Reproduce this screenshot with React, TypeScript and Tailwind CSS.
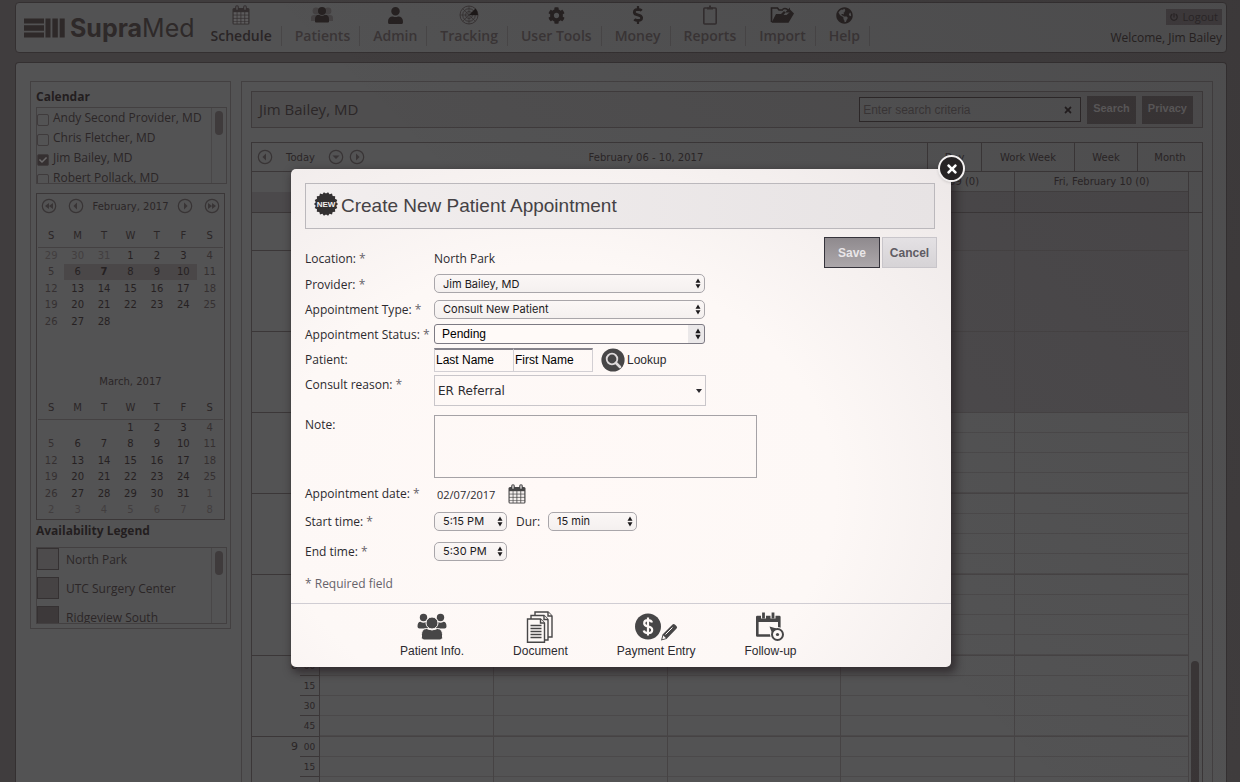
import type { ReactNode } from 'react';
import {
  FaCheck,
  FaCog,
  FaDollarSign,
  FaGlobeAmericas,
  FaPowerOff,
  FaTimes,
  FaUser,
} from 'react-icons/fa';

const CalendarIcon = ({ className }: { className: string }) => (
  <svg viewBox="0 0 18 20" className={className} aria-hidden="true">
    <rect x="0.5" y="3" width="17" height="16.5" rx="1.5" fill="currentColor" />
    <g fill="currentColor">
      <rect x="3.2" y="0.2" width="3.6" height="5.6" rx="1.8" />
      <rect x="11.2" y="0.2" width="3.6" height="5.6" rx="1.8" />
    </g>
    <g className="fill-(--cell)">
      <rect x="4.4" y="1.2" width="1.2" height="3.6" rx="0.6" />
      <rect x="12.4" y="1.2" width="1.2" height="3.6" rx="0.6" />
      {[7.2, 10.4, 13.6, 16.6].map((y) =>
        [1.6, 5.4, 9.3, 13.2].map((x) => (
          <rect key={`${x}-${y}`} x={x} y={y} width="3.1" height={y > 16 ? 2 : 2.5} />
        )),
      )}
    </g>
  </svg>
);

const PatientsIcon = () => (
  <svg viewBox="0 0 24 18" className="h-[18px] w-6" aria-hidden="true">
    <g fill="#444142">
      <circle cx="6" cy="5" r="3.4" />
      <circle cx="18" cy="5" r="3.4" />
      <path d="M1 15v-3q0-3 3-3h3v6zM23 15v-3q0-3-3-3h-3v6z" />
    </g>
    <g fill="#262121">
      <circle cx="12" cy="5" r="4" />
      <path d="M5 15.500v-2.500q0-4 4-4.200 3 1.800 6 0 4 .2 4 4.200v2.500q0 1-1 1H6q-1 0-1-1z" />
    </g>
  </svg>
);

const TrackingIcon = () => (
  <svg viewBox="0 0 20 20" className="h-5 w-5" fill="none" stroke="#353031" strokeWidth="0.900" aria-hidden="true">
    <circle cx="10" cy="10" r="9" />
    <circle cx="10" cy="10" r="6.300" />
    <circle cx="10" cy="10" r="3.500" />
    <path d="M1 10h18M10 1v18M3.600 3.600l12.800 12.800M3.600 16.400L10 10" strokeWidth="0.7" />
    <path d="M10 10L16.500 3.500A9 9 0 0 1 19 10z" fill="#1c1818" stroke="none" />
  </svg>
);

const ClipboardIcon = () => (
  <svg viewBox="0 0 16 20" className="h-5 w-4" fill="none" stroke="#332e2f" aria-hidden="true">
    <rect x="1.800" y="3" width="12.400" height="16" rx="1" strokeWidth="1.600" />
    <path d="M5 3.500h6M8 .5v3" strokeWidth="2" />
  </svg>
);

const ImportIcon = () => (
  <svg viewBox="0 0 24 18" className="h-[18px] w-6" aria-hidden="true">
    <path d="M1.500 16V2h6l1.500 2h4" fill="none" stroke="currentColor" strokeWidth="1.600" />
    <path d="M1.500 16.800L6 8h5l3-3 1.500 1.500L13.500 9h3L20 6V3.500L24 7.500 18.500 16.800z" fill="currentColor" />
    <path d="M12.500 3.500q3-2.500 6 1" fill="none" stroke="currentColor" strokeWidth="1.500" />
    <path d="M20 1.500v5h-5z" fill="currentColor" />
  </svg>
);

const navItems: { label: string; icon: ReactNode; active?: boolean }[] = [
  { label: 'Schedule', icon: <CalendarIcon className="h-5 w-[18px] text-[#332e2f]" />, active: true },
  { label: 'Patients', icon: <PatientsIcon /> },
  { label: 'Admin', icon: <FaUser className="h-[17px] w-[15px]" /> },
  { label: 'Tracking', icon: <TrackingIcon /> },
  { label: 'User Tools', icon: <FaCog className="size-[17px]" /> },
  { label: 'Money', icon: <FaDollarSign className="size-[18px]" /> },
  { label: 'Reports', icon: <ClipboardIcon /> },
  { label: 'Import', icon: <ImportIcon /> },
  { label: 'Help', icon: <FaGlobeAmericas className="size-[17px]" /> },
];

function Header() {
  return (
    <header className="mt-0.5 mr-[13px] ml-[15px] flex h-[51px] shrink-0 rounded-sm border border-[#343031] bg-[#525253] pl-2">
      <a href="#home" aria-label="SupraMed" className="flex h-[49px] items-center gap-1 text-[#2e2929]">
        <svg viewBox="0 0 42 20" className="h-5 w-[42px]" fill="currentColor" aria-hidden="true">
          <path d="M0 .5h20v5H0zM0 7.200h20v5.600H0zM0 14.500h20v5H0zM21.500.5h5v19h-5zM28.400.5h5.400v19h-5.400zM35.700.5h5v19h-5z" />
        </svg>
        <span className="font-['Inter',sans-serif] text-[25px] leading-8">
          <b>Supra</b>
          Med
        </span>
      </a>
      <nav className="ml-[3px] flex text-[#262121]">
        {navItems.map((item) => (
          <div key={item.label} className="flex items-end pb-1.5">
            <button
              type="button"
              className="flex flex-col items-center pr-[9px] pl-[13px] [--cell:#5c5b5c]"
            >
              <span className="flex h-[22px] items-center justify-center">{item.icon}</span>
              <span
                className={`font-['Open_Sans',sans-serif] text-sm leading-5 font-semibold ${item.active ? 'text-[#2a2526]' : 'text-[#3a3536]'}`}
              >
                {item.label}
              </span>
            </button>
            <span className="h-5 w-px bg-[#484647]" />
          </div>
        ))}
      </nav>
      <div className="ml-auto flex flex-col items-end pt-1.5 pr-1 font-['Open_Sans',sans-serif] text-[#262121]">
        <button
          type="button"
          className="flex h-4 items-center gap-1 bg-[#403c3e] px-1 text-[11px] text-[#2a2627]"
        >
          <FaPowerOff className="size-2" />
          Logout
        </button>
        <span className="mt-[3px] text-xs leading-5">Welcome, Jim Bailey</span>
      </div>
    </header>
  );
}

const providers = ['Andy Second Provider, MD', 'Chris Fletcher, MD', 'Jim Bailey, MD', 'Robert Pollack, MD'];

const weekdays = ['S', 'M', 'T', 'W', 'T', 'F', 'S'];

const february = [
  [29, 30, 31, 1, 2, 3, 4],
  [5, 6, 7, 8, 9, 10, 11],
  [12, 13, 14, 15, 16, 17, 18],
  [19, 20, 21, 22, 23, 24, 25],
  [26, 27, 28, 0, 0, 0, 0],
  [0, 0, 0, 0, 0, 0, 0],
];
const march = [
  [0, 0, 0, 1, 2, 3, 4],
  [5, 6, 7, 8, 9, 10, 11],
  [12, 13, 14, 15, 16, 17, 18],
  [19, 20, 21, 22, 23, 24, 25],
  [26, 27, 28, 29, 30, 31, 1],
  [2, 3, 4, 5, 6, 7, 8],
];

function dayTone(week: number, day: number, column: number) {
  if ((week === 0 && day > 20) || (week > 3 && day < 9)) return 'text-[#423e3f]';
  return column === 0 || column === 6 ? 'text-[#353031]' : 'text-[#262122]';
}

function MonthTable({ weeks, label, currentWeek }: { weeks: number[][]; label: string; currentWeek?: number }) {
  return (
    <table aria-label={label} className="w-full table-fixed border-collapse text-center text-[10px]">
      <thead>
        <tr className="h-[23px] border-b border-[#444142] text-[#2b2627]">
          {weekdays.map((name, i) => (
            <th key={i} className="p-0 font-normal">
              {name}
            </th>
          ))}
        </tr>
      </thead>
      <tbody>
        {weeks.map((week, row) => (
          <tr key={row} className={row % 2 ? 'h-4' : 'h-[17px]'}>
            {week.map((day, column) => {
              const current = row === currentWeek && column > 0 && column < 6;
              const today = row === currentWeek && column === 2;
              return (
                <td
                  key={column}
                  className={`p-0 leading-4 ${dayTone(row, day, column)} ${current ? 'bg-[#4a4748]' : ''} ${today ? 'font-bold' : ''}`}
                >
                  {day || ''}
                </td>
              );
            })}
          </tr>
        ))}
      </tbody>
    </table>
  );
}

type ArrowKind = 'left' | 'right' | 'down' | 'first' | 'last';

const arrowPaths: Record<ArrowKind, string> = {
  left: 'M9 4.500v7L5.500 8z',
  right: 'M7 4.500v7L10.500 8z',
  down: 'M4.500 6.500h7L8 10z',
  first: 'M8 5v6L4 8zM12 5v6L8 8z',
  last: 'M4 5v6l4-3zM8 5v6l4-3z',
};

function ArrowButton({ kind, label }: { kind: ArrowKind; label: string }) {
  return (
    <button type="button" aria-label={label}>
      <svg viewBox="0 0 16 16" className="size-4 text-[#393536]" aria-hidden="true">
        <circle cx="8" cy="8" r="6.700" fill="none" stroke="currentColor" strokeWidth="1.200" />
        <path d={arrowPaths[kind]} fill="currentColor" />
      </svg>
    </button>
  );
}

const legend = [
  { name: 'North Park', swatch: 'bg-[#4d4b4c]' },
  { name: 'UTC Surgery Center', swatch: 'bg-[#464344]' },
  { name: 'Ridgeview South', swatch: 'bg-[#3d393a]' },
];

function ScrollTrack() {
  return (
    <div className="w-[15px] shrink-0 border-l border-[#494748] pt-[3px] pl-[3px]">
      <div className="h-6 w-2 rounded-full bg-[#3f3b3c]" />
    </div>
  );
}

function Sidebar() {
  return (
    <aside className="w-[201px] shrink-0 self-start border border-[#434041] pt-[5px] pr-[3px] pb-1 pl-[5px] font-['Open_Sans',sans-serif] text-[#2b2627]">
      <h2 className="text-xs leading-5 font-bold text-[#231e1f]">Calendar</h2>
      <div className="flex h-[77px] overflow-hidden border border-[#434041]">
        <div className="flex-1">
          {providers.map((name) => (
            <label key={name} className="relative flex h-5 items-center gap-1 text-xs whitespace-nowrap">
              <input
                type="checkbox"
                defaultChecked={name === 'Jim Bailey, MD'}
                className="peer mt-1 size-3 appearance-none rounded-xs border border-[#3f3b3c] checked:bg-[#353031]"
              />
              <FaCheck className="absolute top-2 left-0.5 hidden size-2 text-[#6b696a] peer-checked:block" />
              {name}
            </label>
          ))}
        </div>
        <ScrollTrack />
      </div>

      <div className="mt-[9px] mr-[2px] h-[327px] border border-[#3b3738] px-px font-['DejaVu_Sans',sans-serif]">
        <div className="mt-1 flex h-4 items-center justify-between px-[3px]">
          <div className="flex gap-[11px]">
            <ArrowButton kind="first" label="Previous year" />
            <ArrowButton kind="left" label="Previous month" />
          </div>
          <span className="text-[10px]">February, 2017</span>
          <div className="flex gap-[11px]">
            <ArrowButton kind="right" label="Next month" />
            <ArrowButton kind="last" label="Next year" />
          </div>
        </div>
        <div className="mt-2.5">
          <MonthTable weeks={february} label="February 2017" currentWeek={1} />
        </div>
        <p className="mt-[28px] mb-1.5 text-center text-[10px] leading-4">March, 2017</p>
        <MonthTable weeks={march} label="March 2017" />
      </div>

      <h2 className="text-xs leading-[22px] font-bold text-[#231e1f]">Availability Legend</h2>
      <div className="mt-[5px] flex h-[77px] overflow-hidden border border-[#434041]">
        <ul className="flex-1">
          {legend.map((item) => (
            <li key={item.name} className="flex h-[29px] gap-[7px] text-xs leading-6">
              <span className={`size-[22px] border border-[#353132] ${item.swatch}`} />
              {item.name}
            </li>
          ))}
        </ul>
        <ScrollTrack />
      </div>
    </aside>
  );
}

const columns = [
  'Mon, February 06 (0)',
  'Tue, February 07 (0)',
  'Wed, February 08 (0)',
  'Thu, February 09 (0)',
  'Fri, February 10 (0)',
];
const hours = [3, 4, 5, 6, 7, 8, 9];
const quarters = ['00', '15', '30', '45'];

function Scheduler() {
  return (
    <section className="mt-[14px] flex min-h-0 flex-1 flex-col border border-b-0 border-[#3b3738] font-['DejaVu_Sans',sans-serif] text-[10px] text-[#2a2526]">
      <div className="flex h-7 shrink-0">
        <div className="flex items-center gap-[5px] pl-[5px]">
          <ArrowButton kind="left" label="Previous week" />
          <button type="button" className="px-2">
            Today
          </button>
          <ArrowButton kind="down" label="Pick a date" />
          <ArrowButton kind="right" label="Next week" />
        </div>
        <p className="flex-1 self-center text-center">February 06 - 10, 2017</p>
        <div className="flex w-[275px] text-center">
          <button type="button" className="w-[54px] border-l border-[#3b3738]">
            Day
          </button>
          <button type="button" className="w-[93px] border-l border-[#3b3738]">
            Work Week
          </button>
          <button type="button" className="w-[63px] border-l border-[#3b3738]">
            Week
          </button>
          <button type="button" className="flex-1 border-l border-[#3b3738]">
            Month
          </button>
        </div>
      </div>

      <div className="flex h-[42px] shrink-0 border-y border-[#3b3738]">
        <div className="w-[68px] border-r border-[#3b3738] bg-[linear-gradient(#525253_20px,#4b494b_20px)]" />
        {columns.map((name) => (
          <div key={name} className="flex-1 border-r border-[#3f3b3c] text-center">
            <p className="h-5 border-b border-[#434041] leading-5">{name}</p>
            <div className="h-5 bg-[#4b494b]" />
          </div>
        ))}
        <div className="w-[13px]" />
      </div>

      <div className="flex min-h-0 flex-1 overflow-hidden">
        <div className="w-[68px] shrink-0 border-r border-[#3b3738] pt-[37px]">
          {hours.map((hour) => (
            <div key={hour} className="flex h-[81px] border-t border-[#3b3738]">
              <span className="flex-1 pr-0.5 text-right text-[11px] leading-5">{hour}</span>
              <ul className="w-[19px] text-[9px]">
                {quarters.map((quarter) => (
                  <li key={quarter} className="h-5 border-b border-[#3b3738] text-center leading-5 last:border-b-0">
                    {quarter}
                  </li>
                ))}
              </ul>
            </div>
          ))}
        </div>
        {columns.map((name) => (
          <div key={name} className="flex-1 border-r border-[#464344]">
            <div className="h-[37px] bg-[#4c4a4c]" />
            {hours.map((hour) => (
              <div
                key={hour}
                className={`h-[81px] border-t border-[#464344] ${hour < 5 ? 'bg-[#4c4a4c]' : 'bg-[repeating-linear-gradient(transparent_0_19px,#4b494a_19px_20px)]'}`}
              />
            ))}
          </div>
        ))}
        <div className="flex w-[13px] justify-center pt-[448px]">
          <div className="h-60 w-2 shrink-0 rounded-full bg-[#3a3637]" />
        </div>
      </div>
    </section>
  );
}

function Workspace() {
  return (
    <main className="mt-[9px] mr-[13px] ml-[15px] flex min-h-0 flex-1 gap-2.5 rounded-t-sm border border-b-0 border-[#343031] bg-[#535354] pt-[18px] pr-[13px] pl-[14px]">
      <Sidebar />
      <div className="flex min-w-0 flex-1 flex-col border border-b-0 border-[#434041] px-[9px] pt-[9px]">
        <div className="flex h-[37px] shrink-0 items-center gap-1.5 border border-[#3f3b3c] bg-[#4f4e4f] pr-[9px] pl-[7px] font-['Liberation_Sans',sans-serif] text-[11px]">
          <h1 className="flex-1 font-['Open_Sans',sans-serif] text-[15px] text-[#2c2728]">Jim Bailey, MD</h1>
          <div className="relative w-[222px]">
            <input
              type="text"
              aria-label="Search"
              placeholder="Enter search criteria"
              className="h-[25px] w-full border border-[#2d2829] bg-[#525253] px-[3px] text-xs placeholder:text-[#3a3637]"
            />
            <button type="button" aria-label="Clear search" className="absolute top-2 right-2 text-[#211c1d]">
              <FaTimes className="size-[10px]" />
            </button>
          </div>
          <button type="button" className="h-7 bg-[#3a3637] px-1.5 pb-0.5 font-bold text-[#5e5c5d]">
            Search
          </button>
          <button type="button" className="h-7 bg-[#3a3637] px-1.5 pb-0.5 font-bold text-[#5e5c5d]">
            Privacy
          </button>
        </div>
        <Scheduler />
      </div>
    </main>
  );
}

const UpDown = ({ className }: { className: string }) => (
  <svg viewBox="0 0 6 12" className={`pointer-events-none text-[#1c1a1c] ${className}`} fill="currentColor" aria-hidden="true">
    <path d="M3 .5l2.700 4.700H.3zM3 11.500L.3 6.800h5.400z" />
  </svg>
);

function PopupSelect({ id, value, className }: { id: string; value: string; className: string }) {
  return (
    <div className={`relative mb-0.5 ${className}`}>
      <select
        id={id}
        className="block h-[19px] w-full appearance-none rounded-[5px] border border-[#a9a6aa] bg-[linear-gradient(#fbf7f6,#f4f0ef)] pr-4 pl-2 font-['Inter',sans-serif] text-[11px] leading-4 text-[#1c1a1c]"
      >
        <option>{value}</option>
      </select>
      <UpDown className="absolute top-1 right-1 h-[11px] w-1.5" />
    </div>
  );
}

function Row({
  label,
  htmlFor,
  required,
  className,
  children,
}: {
  label: string;
  htmlFor?: string;
  required?: boolean;
  className: string;
  children: ReactNode;
}) {
  return (
    <div className={`flex items-center ${className}`}>
      <label htmlFor={htmlFor} className="w-[129px] shrink-0 whitespace-nowrap">
        {label}
        {required && <span className="text-[#66636a]"> *</span>}
      </label>
      {children}
    </div>
  );
}

const badgePoints = Array.from({ length: 36 }, (_, i) => {
  const radius = i % 2 ? 10.4 : 12;
  const angle = (i * Math.PI) / 18;
  return `${12 + radius * Math.cos(angle)},${12 + radius * Math.sin(angle)}`;
}).join(' ');

const NewBadge = () => (
  <svg viewBox="0 0 24 24" className="-mt-1 size-6" aria-hidden="true">
    <polygon points={badgePoints} fill="#333031" />
    <text x="12" y="14.800" textAnchor="middle" fill="#f2eeee" className="font-['Liberation_Sans',sans-serif] text-[8px] font-bold">
      NEW
    </text>
  </svg>
);

const GroupIcon = () => (
  <svg viewBox="0 0 30 30" className="size-[30px]" fill="#474647" aria-hidden="true">
    <circle cx="6.500" cy="5.500" r="3.700" />
    <circle cx="23.500" cy="5.500" r="3.700" />
    <path d="M.5 14.500q0-4.500 3-4.700 3 1.800 6 0 1.500.4 1.500 3v3.700H2.500q-2 0-2-2zM29.500 14.500q0-4.500-3-4.700-3 1.800-6 0-1.500.4-1.500 3v3.700h8.500q2 0 2-2z" />
    <circle cx="15" cy="11" r="6" stroke="#fdf8f6" />
    <path d="M4.500 25.500v-3q0-5.500 5-6 5.500 3 11 0 5 .5 5 6v3q0 2.500-2.500 2.500H7q-2.500 0-2.500-2.500z" stroke="#fdf8f6" />
  </svg>
);

const DocumentIcon = () => (
  <svg viewBox="0 0 28 32" className="h-8 w-7" fill="#fdf8f6" stroke="#474647" strokeWidth="1.400" aria-hidden="true">
    <path d="M9 1h13l4 4v21H9z" />
    <path d="M22 1v4h4" />
    <path d="M5 4.500h13l4 4V29H5z" />
    <path d="M18 4.500v4h4" />
    <path d="M1.500 8h13l4 4v19.200h-17z" />
    <path d="M14.500 8v4h4M4.500 14.500h11M4.500 17.500h11M4.500 20.500h11M4.500 23.500h11M4.500 26.500h11" />
  </svg>
);

const PaymentIcon = () => (
  <svg viewBox="0 0 44 30" className="h-[30px] w-11" aria-hidden="true">
    <circle cx="14" cy="14.500" r="13" fill="#474647" />
    <path
      d="M18 10.500q-.8-2.300-4-2.300-3.800 0-3.800 3 0 2.500 3.800 3.200 4.200.8 4.200 3.500 0 3.100-4.200 3.100-3.700 0-4.300-2.600M14 5.500v18"
      fill="none"
      stroke="#fdf8f6"
      strokeWidth="2.200"
    />
    <path d="M27 28.500l1.500-6L38.500 12.500q1.200-1.200 2.600.2l1.300 1.300q1.400 1.400.2 2.600L32.500 27z" fill="#474647" />
    <path d="M28.300 27.200l1-3.700 2.700 2.700z" fill="#fdf8f6" />
    <path d="M31.500 22.500l7-7" stroke="#fdf8f6" />
  </svg>
);

const FollowUpIcon = () => (
  <svg viewBox="0 0 30 30" className="size-[30px]" aria-hidden="true">
    <path d="M2.300 5h22v18.500h-22z" fill="none" stroke="#474647" strokeWidth="2.600" strokeLinejoin="round" />
    <path d="M2 4h22.500v6H2z" fill="#474647" />
    <path d="M8.500 0v6.500M18 0v6.500" stroke="#fdf8f6" strokeWidth="5" />
    <path d="M8.500.5v6M18 .5v6" stroke="#474647" strokeWidth="2.800" />
    <circle cx="22.500" cy="22.500" r="7.500" fill="#fdf8f6" />
    <path d="M14.500 14.500l7 2-4.500 4.500z" fill="#474647" />
    <circle cx="22.500" cy="22.500" r="5.500" fill="#fdf8f6" stroke="#474647" strokeWidth="2" />
    <circle cx="22.500" cy="22.500" r="1.600" fill="#474647" />
  </svg>
);

const actions = [
  { label: 'Patient Info.', icon: <GroupIcon /> },
  { label: 'Document', icon: <DocumentIcon /> },
  { label: 'Payment Entry', icon: <PaymentIcon /> },
  { label: 'Follow-up', icon: <FollowUpIcon /> },
];

function AppointmentDialog() {
  return (
    <div
      role="dialog"
      aria-labelledby="dialog-title"
      className="relative w-[660px] rounded-[5px] bg-[radial-gradient(ellipse_at_40%_65%,#fff9f7_0%,#fdf8f6_50%,#ede8e8_100%)] shadow-[3px_4px_8px_2px_rgba(38,32,34,0.7)]"
    >
      <button
        type="button"
        aria-label="Close"
        className="absolute -top-[14px] -right-[14px] flex size-[27px] items-center justify-center rounded-full border-2 border-[#f3f0f0] bg-[#262324] text-white shadow-sm"
      >
        <FaTimes className="size-3.5" />
      </button>

      <form className="px-[14px] pt-[14px] font-['Open_Sans',sans-serif] text-xs leading-5 text-[#2c2a2f]">
        <div className="mr-0.5 flex h-[46px] items-center gap-[3px] border border-[#bbb8bc] bg-[linear-gradient(90deg,#f2eeee,#e7e3e4)] pl-2">
          <NewBadge />
          <h2 id="dialog-title" className="font-['Liberation_Sans',sans-serif] text-[19px] text-[#454245]">
            Create New Patient Appointment
          </h2>
        </div>

        <div className="flex justify-between pt-2">
          <div className="pt-[9px]">
            <Row label="Location:" required className="h-[26px]">
              <span>North Park</span>
            </Row>
            <Row label="Provider:" required htmlFor="provider" className="h-[25px]">
              <PopupSelect id="provider" value="Jim Bailey, MD" className="w-[271px]" />
            </Row>
            <Row label="Appointment Type:" required htmlFor="type" className="h-[26px]">
              <PopupSelect id="type" value="Consult New Patient" className="w-[271px]" />
            </Row>
          </div>
          <div className="flex items-start gap-0.5 font-['Liberation_Sans',sans-serif] font-bold">
            <button
              type="submit"
              className="h-[31px] w-14 border border-[#35333b] bg-[linear-gradient(#8f8a8e,#aca7aa)] text-[#e9e6e8]"
            >
              Save
            </button>
            <button
              type="button"
              className="h-[31px] w-[55px] border border-[#c8c5ca] bg-[linear-gradient(#e4e1e4,#d6d3d6)] text-[#5f5c64]"
            >
              Cancel
            </button>
          </div>
        </div>

        <Row label="Appointment Status:" required htmlFor="status" className="h-[23px]">
          <div className="relative mb-0.5 w-[271px]">
            <select
              id="status"
              className="block h-5 w-full appearance-none rounded-[3px] border border-[#7d7a83] bg-[linear-gradient(90deg,#fffaf8_94%,#ebe8e9_94%)] pl-[7px] font-['Liberation_Sans',sans-serif] text-xs leading-[18px] text-black"
            >
              <option>Pending</option>
            </select>
            <UpDown className="absolute top-1 right-1 h-3 w-1.5" />
          </div>
        </Row>
        <Row label="Patient:" htmlFor="last-name" className="h-[27px]">
          <div className="flex font-['Liberation_Sans',sans-serif] text-black">
            <input
              id="last-name"
              type="text"
              defaultValue="Last Name"
              className="h-6 w-20 border border-t-2 border-[#d2cfd3] border-t-[#85828a] px-px"
            />
            <input
              type="text"
              aria-label="First name"
              defaultValue="First Name"
              className="h-6 w-[79px] border border-t-2 border-l-0 border-[#d2cfd3] border-t-[#85828a] px-px"
            />
          </div>
          <button
            type="button"
            className="ml-2 flex items-center gap-0.5 font-['Liberation_Sans',sans-serif]"
          >
            <svg viewBox="0 0 24 24" className="size-6" fill="none" aria-hidden="true">
              <circle cx="12" cy="12" r="11.600" fill="#474647" />
              <circle cx="11" cy="11" r="5.300" stroke="#dedadb" strokeWidth="1.800" />
              <path d="M15 15l4 4" stroke="#dedadb" strokeWidth="2.600" strokeLinecap="round" />
            </svg>
            Lookup
          </button>
        </Row>
        <div className="flex pt-0.5">
          <label htmlFor="reason" className="w-[129px] shrink-0">
            Consult reason: <span className="text-[#66636a]">*</span>
          </label>
          <div className="relative w-[272px]">
            <select
              id="reason"
              className="block h-[31px] w-full appearance-none border border-[#c9c6ca] pl-[3px] font-['DejaVu_Sans',sans-serif]"
            >
              <option>ER Referral</option>
            </select>
            <svg viewBox="0 0 6 4" className="pointer-events-none absolute top-3.5 right-1 h-1 w-1.5" aria-hidden="true">
              <path d="M0 0h6L3 4z" fill="currentColor" />
            </svg>
          </div>
        </div>
        <div className="flex pt-[9px]">
          <label htmlFor="note" className="w-[129px] shrink-0">
            Note:
          </label>
          <textarea id="note" className="block h-[63px] w-[323px] resize-none border border-[#a5a2a6]" />
        </div>
        <Row label="Appointment date:" required htmlFor="date" className="mt-[3px] h-[25px]">
          <input id="date" type="text" defaultValue="02/07/2017" className="w-[74px] px-[3px] pt-0.5 text-[11px]" />
          <button type="button" aria-label="Open calendar" className="text-[#474647] [--cell:#f4efee]">
            <CalendarIcon className="h-5 w-[18px]" />
          </button>
        </Row>
        <Row label="Start time:" required htmlFor="start" className="h-8">
          <PopupSelect id="start" value="5:15 PM" className="w-[73px]" />
          <label htmlFor="duration" className="ml-[9px] w-[32px]">
            Dur:
          </label>
          <PopupSelect id="duration" value="15 min" className="w-[89px]" />
        </Row>
        <Row label="End time:" required htmlFor="end" className="h-7">
          <PopupSelect id="end" value="5:30 PM" className="w-[73px]" />
        </Row>
        <p className="pt-2 pb-[9px] text-[#66636a]">* Required field</p>
      </form>

      <div className="flex gap-[49px] border-t border-[#d0cdd3] pt-[7px] pb-2 pl-[109px] font-['Liberation_Sans',sans-serif] text-xs text-[#2c2a2f]">
        {actions.map((action) => (
          <button key={action.label} type="button" className="flex flex-col items-center">
            <span className="flex h-8 items-center">{action.icon}</span>
            <span className="leading-4">{action.label}</span>
          </button>
        ))}
      </div>
    </div>
  );
}

export default function App() {
  return (
    <div className="relative flex h-screen flex-col overflow-hidden bg-[#403d3e]">
      <Header />
      <Workspace />
      <div className="absolute inset-0 flex items-start justify-center bg-[linear-gradient(45deg,transparent_50%,rgba(30,26,28,0.12))] pt-[169px] pl-0.5">
        <AppointmentDialog />
      </div>
    </div>
  );
}
